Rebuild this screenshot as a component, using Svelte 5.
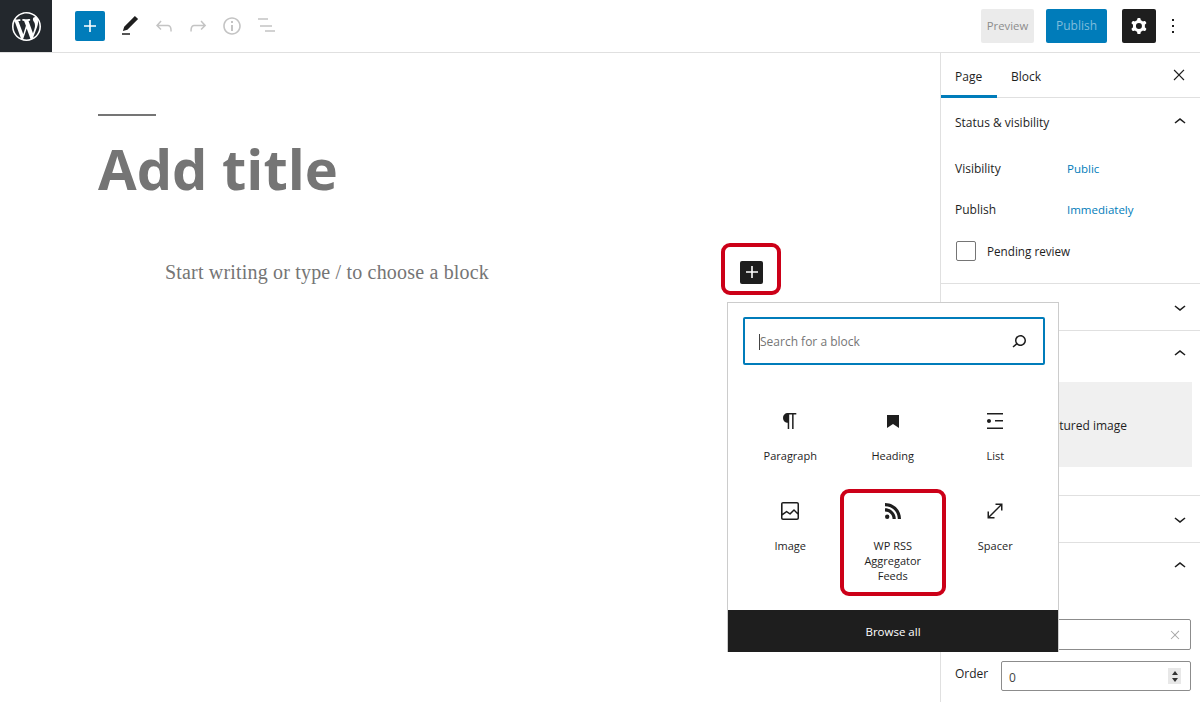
<script>
  const d = {
    plus: 'M18 11.2h-5.2V6h-1.6v5.2H6v1.6h5.2V18h1.6v-5.2H18z',
    pen: 'M20.1 5.1L16.9 2 6.2 12.7l-1.3 4.4 4.5-1.3L20.1 5.1zM4 20.8h8v-1.5H4v1.5z',
    undo: 'M18.3 11.7c-.6-.6-1.4-.9-2.3-.9H6.7l2.9-3.3-1.1-1-4.5 5L8.5 16l1-1-2.7-2.7H16c.5 0 .9.2 1.3.5 1 1 1 3.4 1 4.5v.3h1.5v-.2c0-1.5 0-4.3-1.5-5.7z',
    redo: 'M15.6 6.5l-1.1 1 2.9 3.3H8c-.9 0-1.7.3-2.3.9-1.4 1.5-1.4 4.2-1.4 5.6v.2h1.5v-.3c0-1.1 0-3.5 1-4.5.3-.3.7-.5 1.3-.5h9.2L14.5 15l1.1 1.1 4.6-4.6-4.6-5z',
    info: 'M12 3.2c-4.8 0-8.8 3.9-8.8 8.8 0 4.8 3.9 8.8 8.8 8.8 4.8 0 8.8-3.9 8.8-8.8 0-4.8-4-8.8-8.8-8.8zm0 16c-4 0-7.2-3.3-7.2-7.2C4.8 8 8 4.8 12 4.8s7.2 3.3 7.2 7.2c0 4-3.2 7.2-7.2 7.2zM11 17h2v-6h-2v6zm0-8h2V7h-2v2z',
    outline: 'M4 4.2h10v1.6H4zM6 11.2h12v1.6H6zM11 16.2h10v1.6H11z',
    cog: 'M10.289 4.836A1 1 0 0111.275 4h1.306a1 1 0 01.987.836l.244 1.466c.787.26 1.503.679 2.108 1.218l1.393-.522a1 1 0 011.216.437l.653 1.13a1 1 0 01-.23 1.273l-1.148.944a6.025 6.025 0 010 2.435l1.149.946a1 1 0 01.23 1.272l-.653 1.13a1 1 0 01-1.216.437l-1.394-.522c-.605.54-1.32.958-2.108 1.218l-.244 1.466a1 1 0 01-.987.836h-1.306a1 1 0 01-.986-.836l-.244-1.466a5.995 5.995 0 01-2.108-1.218l-1.394.522a1 1 0 01-1.217-.436l-.653-1.131a1 1 0 01.23-1.272l1.149-.946a6.026 6.026 0 010-2.435l-1.148-.944a1 1 0 01-.23-1.272l.653-1.131a1 1 0 011.217-.437l1.393.522a5.994 5.994 0 012.108-1.218l.244-1.466zM14.929 12a3 3 0 11-6 0 3 3 0 016 0z',
    more: 'M13 19h-2v-2h2v2zm0-6h-2v-2h2v2zm0-6h-2V5h2v2z',
    close: 'M13 11.9l5.5-5.5-1.1-1L12 10.9 6.6 5.5l-1 1 5.4 5.4-5.5 5.6 1 1L12 13l5.4 5.5 1.1-1-5.5-5.6z',
    up: 'M6.5 12.4L12 8l5.5 4.4-.9 1.2L12 10l-4.5 3.6-1-1.2z',
    down: 'M17.5 11.6L12 16l-5.5-4.4.9-1.2L12 14l4.5-3.6 1 1.2z',
    search: 'M13.5 6C10.5 6 8 8.5 8 11.5c0 1.1.3 2.1.9 3l-3.4 3 1 1.1 3.4-2.9c1 .9 2.2 1.4 3.6 1.4 3 0 5.5-2.5 5.5-5.5C19 8.5 16.5 6 13.5 6zm0 9.5c-2.2 0-4-1.8-4-4s1.8-4 4-4 4 1.8 4 4-1.8 4-4 4z',
    paragraph: 'M18.3 4H9.9v-.1l-.9.2c-2.3.4-4 2.4-4 4.8s1.7 4.4 4 4.8l.7.1V20h1.5V5.5h2.9V20h1.5V5.5h2.7V4z',
    bookmark: 'M6 6h12v13l-6-4-6 4z',
    list: 'M4 4v1.5h16V4H4zm8 8.5h8V11h-8v1.5zM4 20h16v-1.5H4V20zm4-8c0-1.1-.9-2-2-2s-2 .9-2 2 .9 2 2 2 2-.9 2-2z',
    image: 'M19 3H5c-1.1 0-2 .9-2 2v14c0 1.1.9 2 2 2h14c1.1 0 2-.9 2-2V5c0-1.1-.9-2-2-2zM5 4.5h14c.3 0 .5.2.5.5v8.4l-3-2.9c-.3-.3-.8-.3-1 0L11.9 14 9 12c-.3-.2-.6-.2-.8 0l-3.6 2.6V5c-.1-.3.1-.5.4-.5zm14 15H5c-.3 0-.5-.2-.5-.5v-2.4l4.1-3 3 1.9c.3.2.7.2.9-.1L16 12l3.5 3.4V19c0 .3-.2.5-.5.5z',
    rss: 'M4 9.2v3.2c4.4 0 7.6 3.2 7.6 7.6h3.2C14.8 14 10 9.2 4 9.2zM4 4v3.200c7.400 0 12.800 5.400 12.800 12.800H20C20 11 13 4 4 4zM6.200 15.600a2.200 2.200 0 100 4.400 2.200 2.200 0 000-4.400z',
    spacer: 'M7 18h4.5v1.5h-7v-7H6V17L17 6h-4.5V4.5h7v7H18V7L7 18Z',
    wp: 'M20 10c0-5.51-4.49-10-10-10C4.48 0 0 4.49 0 10c0 5.52 4.48 10 10 10 5.51 0 10-4.48 10-10zM7.78 15.37L4.37 6.22c.55-.02 1.17-.08 1.17-.08.5-.06.44-1.13-.06-1.11 0 0-1.45.11-2.37.11-.18 0-.37 0-.58-.01C4.12 2.69 6.87 1.11 10 1.11c2.33 0 4.45.87 6.05 2.34-.68-.11-1.65.39-1.65 1.58 0 .74.45 1.36.9 2.1.35.61.55 1.36.55 2.46 0 1.49-1.4 5-1.4 5l-3.03-8.37c.54-.02.82-.17.82-.17.5-.05.44-1.25-.06-1.22 0 0-1.44.12-2.38.12-.87 0-2.33-.12-2.33-.12-.5-.03-.56 1.2-.06 1.22l.92.08 1.26 3.41zM17.41 10c.24-.64.74-1.87.43-4.25.7 1.29 1.05 2.71 1.05 4.25 0 3.29-1.73 6.24-4.4 7.78.97-2.59 1.94-5.2 2.92-7.78zM6.1 18.09C3.12 16.65 1.11 13.53 1.11 10c0-1.3.23-2.48.72-3.59C3.25 10.3 4.67 14.2 6.1 18.09zm4.03-6.63l2.58 6.98c-.86.29-1.76.45-2.71.45-.79 0-1.57-.11-2.29-.33.81-2.38 1.62-4.74 2.42-7.1z'
  };
  const blocks = [
    { n: 'Paragraph', i: d.paragraph },
    { n: 'Heading', i: d.bookmark },
    { n: 'List', i: d.list },
    { n: 'Image', i: d.image },
    { n: 'WP RSS Aggregator Feeds', i: d.rss },
    { n: 'Spacer', i: d.spacer }
  ];
</script>

{#snippet icon(path, cls = '', size = 24, box = 24)}
  <svg class={cls} width={size} height={size} viewBox="0 0 {box} {box}" fill="currentColor" fill-rule="evenodd" aria-hidden="true"><path d={path} /></svg>
{/snippet}

<div class="app">
  <header class="top">
    <a class="logo" href="#wp" aria-label="WordPress">{@render icon(d.wp, '', 29, 20)}</a>
    <div class="tools">
      <button class="add">{@render icon(d.plus)}</button>
      <span class="tool dark">{@render icon(d.pen)}</span>
      <span class="tool off">{@render icon(d.undo)}</span>
      <span class="tool off">{@render icon(d.redo)}</span>
      <span class="tool off">{@render icon(d.info)}</span>
      <span class="tool off">{@render icon(d.outline)}</span>
    </div>
    <div class="actions">
      <button class="preview">Preview</button>
      <button class="publish">Publish</button>
      <button class="settings">{@render icon(d.cog)}</button>
      <span class="more">{@render icon(d.more)}</span>
    </div>
  </header>

  <div class="body">
    <main class="editor">
      <hr class="rule" />
      <h1>Add title</h1>
      <div class="write">
        <p>Start writing or type / to choose a block</p>
        <button class="inline-add">{@render icon(d.plus)}</button>
      </div>
    </main>

    <aside class="side">
      <div class="tabs">
        <span class="tab active">Page</span>
        <span class="tab">Block</span>
        <span class="x">{@render icon(d.close, '', 20)}</span>
      </div>

      <section class="panel status">
        <div class="ph"><span>Status &amp; visibility</span>{@render icon(d.up)}</div>
        <div class="kv"><span>Visibility</span><a href="#v">Public</a></div>
        <div class="kv"><span>Publish</span><a href="#p">Immediately</a></div>
        <label class="check"><i></i>Pending review</label>
      </section>
      <section class="panel">
        <div class="ph"><span></span>{@render icon(d.down)}</div>
      </section>
      <section class="panel featured">
        <div class="ph"><span></span>{@render icon(d.up)}</div>
        <div class="setimg">Set featured image</div>
      </section>
      <section class="panel">
        <div class="ph"><span></span>{@render icon(d.down)}</div>
      </section>
      <section class="attrs">
        <div class="ph"><span></span>{@render icon(d.up)}</div>
        <div class="parent"><span class="clear">{@render icon(d.close, '', 16)}</span></div>
        <div class="order">
          <span>Order</span>
          <div class="num"><em>0</em>
            <span class="spin"><b class="u"></b><b class="dn"></b></span>
          </div>
        </div>
      </section>
    </aside>
  </div>

  <div class="popover">
    <div class="search">
      <span class="ph-text"><i class="caret"></i>Search for a block</span>
      {@render icon(d.search)}
    </div>
    <div class="grid">
      {#each blocks as b}
        <div class="item">
          {@render icon(b.i)}
          <span>{b.n}</span>
        </div>
      {/each}
    </div>
    <div class="browse">Browse all</div>
  </div>

  <div class="mark mark-add"></div>
  <div class="mark mark-rss"></div>
</div>

<style>
  :global(body) { margin: 0; background: #fff; }
  .app {
    position: relative; width: 1200px; height: 702px; overflow: hidden;
    font: 12px/16px "Open Sans", "Noto Sans", sans-serif; color: #1e1e1e;
  }
  button { border: 0; padding: 0; font: inherit; display: flex; align-items: center; justify-content: center; }
  svg { display: block; flex: none; }

  .top { display: flex; align-items: center; height: 52px; border-bottom: 1px solid #e0e0e0; }
  .logo { width: 52px; height: 52px; flex: none; background: #23282d; color: #fff; display: flex; align-items: center; justify-content: center; }
  .tools { display: flex; align-items: center; margin-left: 23px; }
  .add { width: 30px; height: 30px; border-radius: 2px; background: #007cba; color: #fff; margin-right: 8px; }
  .tool { width: 34px; height: 34px; display: flex; align-items: center; justify-content: center; }
  .dark { color: #1e1e1e; }
  .off { color: #c4c4c4; }
  .actions { margin-left: auto; display: flex; align-items: center; }
  .preview { width: 53px; height: 34px; border-radius: 2px; background: #ebebeb; color: #8c8c8c; font-size: 11.3px; }
  .publish { width: 61px; height: 34px; border-radius: 2px; background: #007cba; color: #7fbddc; margin-left: 12px; }
  .settings { width: 34px; height: 34px; border-radius: 2px; background: #1e1e1e; color: #fff; margin-left: 15px; }
  .more { width: 34px; display: flex; justify-content: center; margin-right: 10px; }

  .body { display: flex; height: 649px; }
  .editor { flex: 1; min-width: 0; padding: 61px 0 0 98px; }
  .rule { width: 58px; height: 2px; margin: 0; border: 0; background: #757575; }
  h1 { margin: 15px 0 0; font: 700 56px/74px "Open Sans", "Noto Sans", sans-serif; color: #757575; }
  .write { display: flex; align-items: center; justify-content: space-between; width: 598px; margin: 55px 0 0 67px; }
  .write p { margin: 0; font: 20px/24px "Liberation Serif", serif; letter-spacing: 0.18px; color: #757575; }
  .inline-add { width: 23px; height: 23px; border-radius: 2px; background: #1e1e1e; color: #fff; }

  .side { width: 260px; flex: none; box-sizing: border-box; border-left: 1px solid #e0e0e0; }
  .tabs { display: flex; align-items: center; height: 45px; box-sizing: border-box; border-bottom: 1px solid #e0e0e0; }
  .tab { height: 45px; box-sizing: border-box; padding: 3px 14px 0; display: flex; align-items: center; }
  .tab.active { width: 56px; box-shadow: inset 0 -3px 0 #007cba; }
  .x { margin-left: auto; margin-right: 11px; }
  .panel { border-bottom: 1px solid #e0e0e0; }
  .ph { display: flex; align-items: center; justify-content: space-between; height: 46px; padding: 0 8px 0 14px; }
  .ph span { padding-top: 2px; }
  .status { height: 186px; box-sizing: border-box; }
  .status .ph { height: 47px; margin-bottom: 3px; }
  .kv { display: flex; height: 41px; align-items: center; padding-left: 14px; }
  .kv span { width: 112px; }
  .kv a { color: #007cba; text-decoration: none; font-size: 11.5px; }
  .check { display: flex; align-items: center; gap: 11px; margin: 11px 0 0 15px; height: 20px; font-size: 11.7px; }
  .check i { width: 18px; height: 18px; border: 1px solid #757575; border-radius: 2px; }
  .featured { height: 165px; box-sizing: border-box; }
  .setimg { height: 85px; box-sizing: border-box; padding-top: 2px; margin: 5px 8px 0 15px; background: #f0f0f0; display: flex; align-items: center; justify-content: center; }
  .parent { height: 31px; margin: 30px 9px 0 60px; box-sizing: border-box; border: 1px solid #8c8c8c; border-radius: 2px; display: flex; align-items: center; justify-content: flex-end; padding-right: 7px; color: #a8a8a8; }
  .order { display: flex; align-items: flex-start; margin-top: 11px; padding-left: 14px; }
  .order > span { width: 46px; height: 26px; line-height: 26px; }
  .num { width: 190px; height: 30px; box-sizing: border-box; border: 1px solid #8c8c8c; border-radius: 2px; display: flex; align-items: center; justify-content: space-between; padding: 0 9px 0 7px; }
  .num em { font-style: normal; padding-top: 3px; color: #444; }
  .spin { width: 13px; height: 16px; background: #e8e8e8; display: flex; flex-direction: column; align-items: center; justify-content: center; gap: 3px; }
  .u, .dn { width: 0; height: 0; border: 3.5px solid transparent; }
  .u { border-top: 0; border-bottom: 4px solid #333; }
  .dn { border-bottom: 0; border-top: 4px solid #333; }

  .popover { position: absolute; left: 727px; top: 302px; width: 332px; height: 350px; box-sizing: border-box; border: 1px solid #ccc; border-bottom: 0; background: #fff; display: flex; flex-direction: column; }
  .search { height: 48px; box-sizing: border-box; margin: 14px 13px 0 15px; border: 2px solid #007cba; border-radius: 2px; display: flex; align-items: center; justify-content: space-between; padding: 0 12px 0 15px; color: #757575; }
  .search svg { color: #1e1e1e; }
  .ph-text { position: relative; top: 1px; }
  .caret { position: absolute; left: -1px; top: 0; width: 1px; height: 16px; background: #444; }
  .grid { display: grid; grid-template-columns: repeat(3, 102.5px); grid-auto-rows: 89.5px; margin: 30px 0 0 11px; }
  .item { display: flex; flex-direction: column; align-items: center; gap: 15px; padding: 14px 16px 0; box-sizing: border-box; text-align: center; font-size: 11px; line-height: 15px; }
  .browse { margin-top: auto; height: 42px; box-sizing: border-box; padding-top: 2px; background: #1e1e1e; color: #fff; font-size: 11.5px; display: flex; align-items: center; justify-content: center; }

  .mark { position: absolute; box-sizing: border-box; border: 4px solid #cc0018; border-radius: 9px; }
  .mark-add { left: 721px; top: 243px; width: 60px; height: 52px; }
  .mark-rss { left: 840px; top: 489px; width: 106px; height: 107px; }
</style>
